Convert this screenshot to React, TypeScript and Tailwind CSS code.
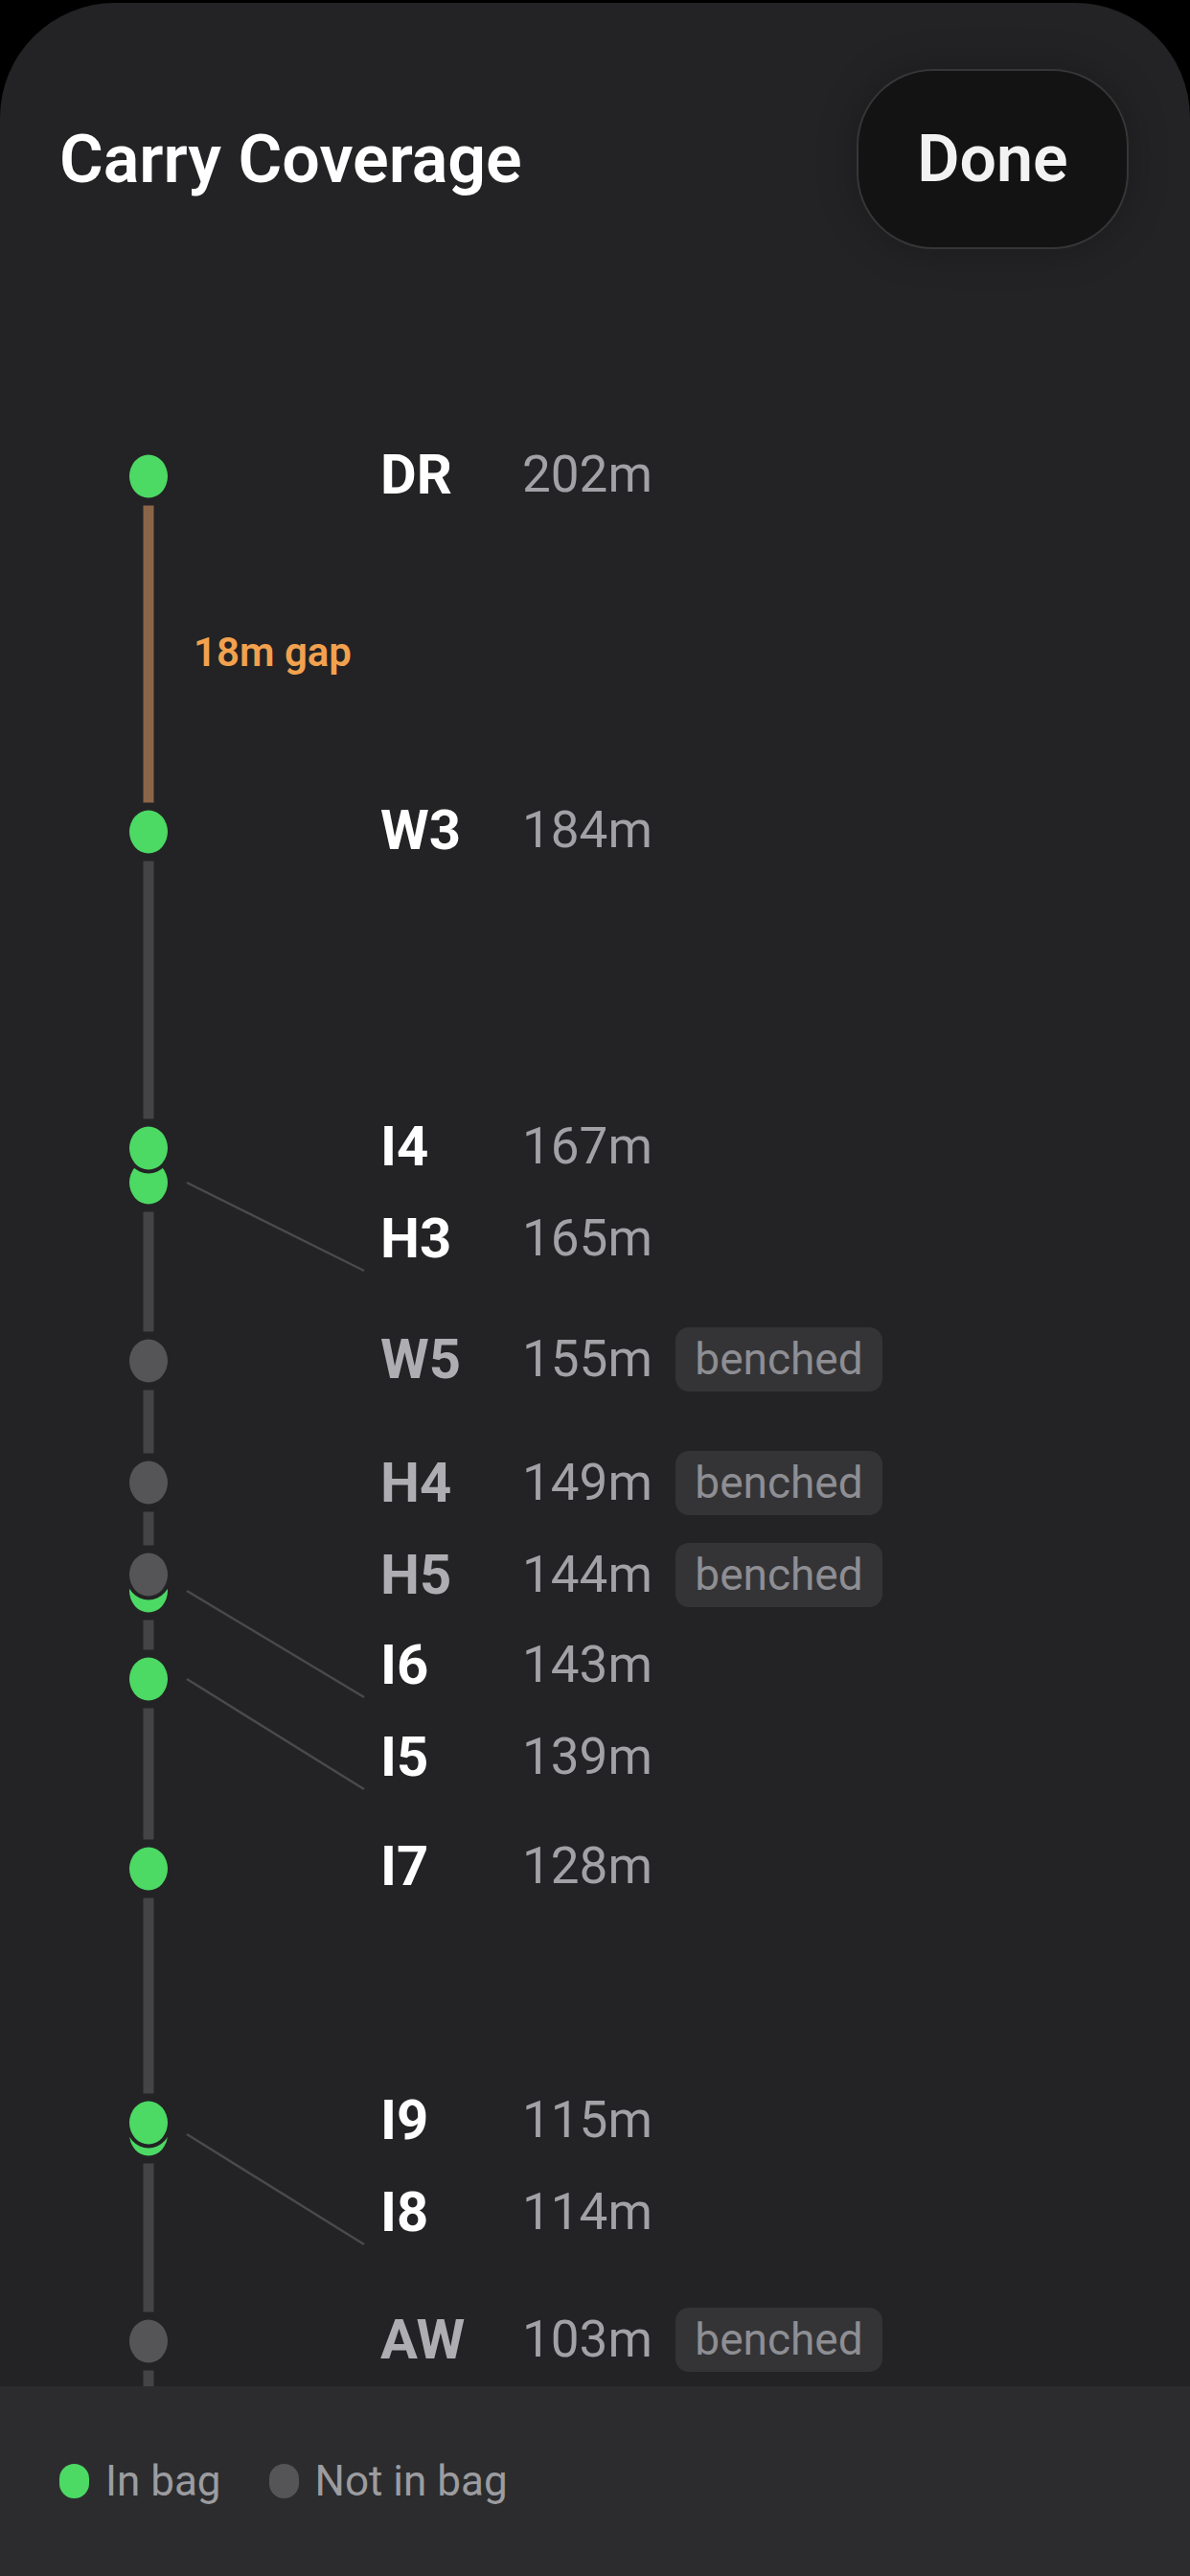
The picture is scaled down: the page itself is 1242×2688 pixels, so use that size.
import React from 'react';

type Club = {
  name: string;
  carry: number;
  dotY: number;
  labelY: number;
  inBag: boolean;
};

// y positions are relative to the top of the timeline area
const clubs: Club[] = [
  { name: 'DR', carry: 202, dotY: 197, labelY: 195, inBag: true },
  { name: 'W3', carry: 184, dotY: 568, labelY: 566, inBag: true },
  { name: 'I4', carry: 167, dotY: 898, labelY: 896, inBag: true },
  { name: 'H3', carry: 165, dotY: 934, labelY: 992, inBag: true },
  { name: 'W5', carry: 155, dotY: 1120, labelY: 1118, inBag: false },
  { name: 'H4', carry: 149, dotY: 1247, labelY: 1247, inBag: false },
  { name: 'H5', carry: 144, dotY: 1343, labelY: 1343, inBag: false },
  { name: 'I6', carry: 143, dotY: 1360, labelY: 1437, inBag: true },
  { name: 'I5', carry: 139, dotY: 1452, labelY: 1533, inBag: true },
  { name: 'I7', carry: 128, dotY: 1650, labelY: 1647, inBag: true },
  { name: 'I9', carry: 115, dotY: 1915, labelY: 1912, inBag: true },
  { name: 'I8', carry: 114, dotY: 1927, labelY: 2008, inBag: true },
  { name: 'AW', carry: 103, dotY: 2143, labelY: 2141, inBag: false },
];

const AXIS_X = 155;
const DOT_RX = 20;
const DOT_RY = 22.5;
const LINE_CLEAR = 8;
const GAP_WARN = 18;
const AREA_HEIGHT = 2190;

const GREEN = '#4cd964';
const GREY_DOT = '#555558';
const SHEET_BG = '#232325';

function Timeline() {
  const segments: { y1: number; y2: number; gap: boolean }[] = [];
  const gapLabels: { y: number; meters: number }[] = [];

  for (let i = 0; i < clubs.length - 1; i++) {
    const a = clubs[i];
    const b = clubs[i + 1];
    const y1 = a.dotY + DOT_RY + LINE_CLEAR;
    const y2 = b.dotY - DOT_RY - LINE_CLEAR;
    const diff = a.carry - b.carry;
    const gap = diff >= GAP_WARN;
    if (y2 > y1) segments.push({ y1, y2, gap });
    if (gap) gapLabels.push({ y: (a.dotY + b.dotY) / 2, meters: diff });
  }
  const last = clubs[clubs.length - 1];
  segments.push({ y1: last.dotY + DOT_RY + LINE_CLEAR, y2: AREA_HEIGHT, gap: false });

  return (
    <div className="relative flex-1 overflow-hidden">
      <svg className="absolute inset-0" width="1242" height={AREA_HEIGHT}>
        {segments.map((s, i) => (
          <rect
            key={i}
            x={AXIS_X - 5.5}
            y={s.y1}
            width="11"
            height={s.y2 - s.y1}
            fill={s.gap ? '#8b6549' : '#444446'}
          />
        ))}
        {clubs
          .filter((c) => c.labelY - c.dotY > 20)
          .map((c) => (
            <line
              key={c.name}
              x1={AXIS_X + 40}
              y1={c.dotY}
              x2={380}
              y2={c.labelY + 34}
              stroke="#4a4a4c"
              strokeWidth="2.5"
            />
          ))}
        {[...clubs].reverse().map((c) => (
          <g key={c.name}>
            <ellipse cx={AXIS_X} cy={c.dotY} rx={DOT_RX + 4} ry={DOT_RY + 4} fill={SHEET_BG} />
            <ellipse cx={AXIS_X} cy={c.dotY} rx={DOT_RX} ry={DOT_RY} fill={c.inBag ? GREEN : GREY_DOT} />
          </g>
        ))}
      </svg>

      {gapLabels.map((g) => (
        <div
          key={g.y}
          className="absolute left-[202px] flex h-[50px] items-center text-[42px] font-semibold leading-none text-[#f2a14e]"
          style={{ top: g.y - 27 }}
        >
          {g.meters}m gap
        </div>
      ))}

      {clubs.map((c) => (
        <div
          key={c.name}
          className="absolute left-[397px] flex h-[70px] items-center leading-none"
          style={{ top: c.labelY - 35 }}
        >
          <span
            className={`w-[148px] text-[58px] font-bold ${c.inBag ? 'text-white' : 'text-[#aeaeb2]'}`}
          >
            {c.name}
          </span>
          <span className="w-[160px] text-[53px] text-[#a1a1a6]">{c.carry}m</span>
          {!c.inBag && (
            <span className="flex h-[67px] w-[216px] items-center justify-center rounded-[14px] bg-[#343436] text-[46px] text-[#8e8e93]">
              benched
            </span>
          )}
        </div>
      ))}
    </div>
  );
}

export default function App() {
  return (
    <div className="flex h-[2688px] w-[1242px] flex-col bg-black pt-[3px] font-['Roboto',sans-serif]">
      <div className="flex flex-1 flex-col overflow-hidden rounded-t-[120px] bg-[#232325]">
        <header className="flex h-[297px] items-start justify-between pl-[62px] pr-[64px] pt-[69px]">
          <div className="flex h-[188px] items-center">
            <h1 className="text-[70px] font-semibold leading-none text-white">Carry Coverage</h1>
          </div>
          <button className="flex h-[188px] w-[284px] items-center justify-center rounded-[80px] border-2 border-[#363638] bg-[#131313] text-[68px] font-semibold leading-none text-[#f2f2f2] shadow-[0_0_40px_rgba(0,0,0,0.25)]">
            Done
          </button>
        </header>

        <Timeline />

        <footer className="flex h-[198px] items-center bg-[#2c2c2e] px-[62px] text-[44px] leading-none text-[#9c9ca0]">
          <span className="h-[36px] w-[31px] rounded-full bg-[#4cd964]" />
          <span className="ml-[17px]">In bag</span>
          <span className="ml-[50px] h-[36px] w-[31px] rounded-full bg-[#555558]" />
          <span className="ml-[17px]">Not in bag</span>
        </footer>
      </div>
    </div>
  );
}
